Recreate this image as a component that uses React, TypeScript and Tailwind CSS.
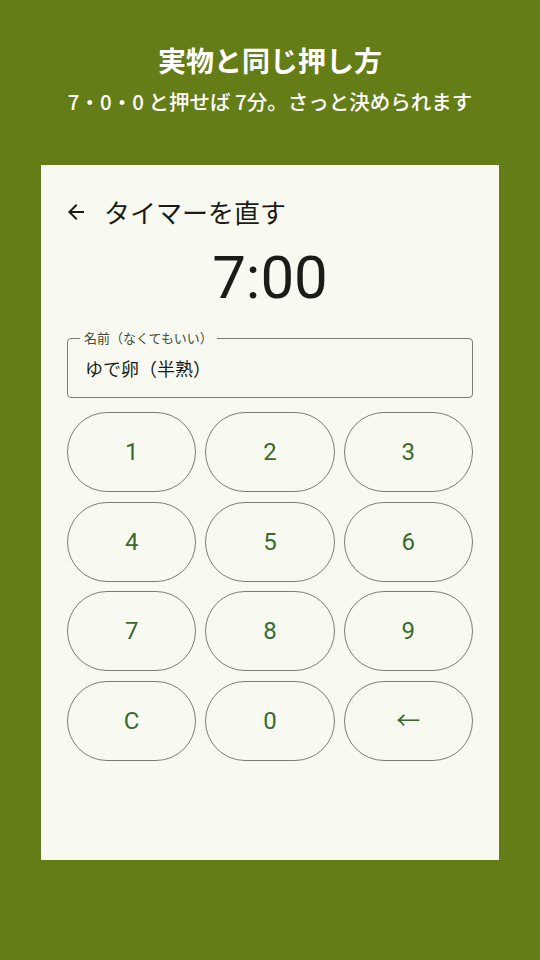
import React from "react";

const jp = { fontFamily: '"Noto Sans CJK JP", "Noto Sans", sans-serif' };
const num = { fontFamily: 'Roboto, "Noto Sans CJK JP", sans-serif' };

const keys = ["1", "2", "3", "4", "5", "6", "7", "8", "9", "C", "0", "←"];

export default function App() {
  return (
    <div className="w-[540px] h-[960px] bg-[#657d16] flex flex-col items-center overflow-hidden" style={jp}>
      <div className="pt-[42px] flex flex-col items-center">
        <div className="h-[36px] leading-[36px] text-[28px] font-bold text-white">実物と同じ押し方</div>
        <div className="mt-[11px] h-[24px] leading-[24px] text-[20.5px] font-medium text-white">7・0・0 と押せば 7分。さっと決められます</div>
      </div>
      <div className="mt-[52px] w-[458px] h-[695px] bg-[#f8faf2] flex flex-col">
        <div className="mt-[23px] h-[48px] flex items-center pl-[23px]">
          <svg width="24" height="24" viewBox="0 0 24 24" className="text-[#1b1c18]">
            <path d="M20 11H7.83l5.59-5.59L12 4l-8 8 8 8 1.41-1.41L7.83 13H20v-2z" fill="currentColor" />
          </svg>
          <span className="ml-[16px] text-[26px] leading-[32px] text-[#1b1c18]">タイマーを直す</span>
        </div>
        <div className="mt-[6px] h-[72px] flex items-center justify-center text-[60px] leading-[72px] text-[#1b1c18]" style={num}>
          7:00
        </div>
        <div className="mt-[24px] mx-[26px] relative h-[60px] border border-[#7d7d78] rounded-[4px] flex items-center px-[17px]">
          <span className="absolute left-[12px] top-[-10px] px-[4px] bg-[#f8faf2] text-[13px] leading-[18px] text-[#44483d]">名前（なくてもいい）</span>
          <span className="text-[18px] text-[#1b1c18]">ゆで卵（半熟）</span>
        </div>
        <div className="mt-[14px] mx-[26px] grid grid-cols-3 gap-x-[9px] gap-y-[9.7px]">
          {keys.map((k) => (
            <div
              key={k}
              className="h-[80px] rounded-full border border-[#7d7d78] flex items-center justify-center text-[24px] text-[#3a6a2f]"
              style={num}
            >
              {k}
            </div>
          ))}
        </div>
      </div>
    </div>
  );
}
